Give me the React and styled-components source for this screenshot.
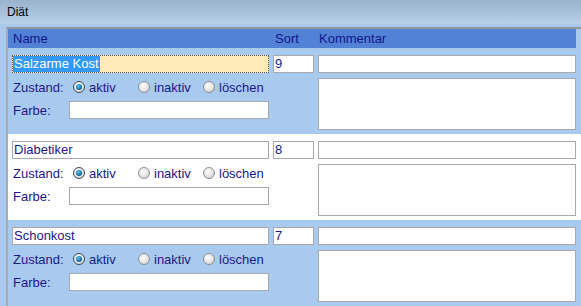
import React from 'react';
import styled, { createGlobalStyle, css } from 'styled-components';

const GlobalStyle = createGlobalStyle`
  html, body {
    margin: 0;
    padding: 0;
    background: #a9caee;
    font-family: "Liberation Sans", Arial, sans-serif;
    font-size: 13px;
    overflow: hidden;
  }
`;

const diets = [
  { name: 'Salzarme Kost', sort: '9', selected: true },
  { name: 'Diabetiker', sort: '8' },
  { name: 'Schonkost', sort: '7' },
];

const states = ['aktiv', 'inaktiv', 'löschen'];

const Window = styled.div`
  width: 581px;
  height: 306px;
  background: #a9caee;
  display: flex;
  flex-direction: column;
  overflow: hidden;
`;

const TitleBar = styled.div`
  height: 24px;
  flex: none;
  display: flex;
  align-items: center;
  padding-left: 7px;
  color: #000;
  font-size: 12px;
  background: linear-gradient(#9ab3cd, #b7cfe8);
`;

const Panel = styled.div`
  margin: 3px 0 0 6px;
  border-top: 2px solid #8f969e;
  border-left: 2px solid #a3abb5;
  flex: 1;
  display: flex;
  flex-direction: column;
`;

const columns = css`
  display: grid;
  grid-template-columns: 257px 41px 258px;
  column-gap: 4px;
`;

const Header = styled.div`
  ${columns}
  height: 19px;
  align-items: center;
  padding-left: 4px;
  margin-right: 5px;
  background: #5182d6;
  color: #15158a;
  span {
    padding-left: 1px;
  }
  span:nth-child(2) {
    padding-left: 2px;
  }
`;

const Row = styled.div`
  ${columns}
  height: 86px;
  box-sizing: border-box;
  padding: 7px 0 0 4px;
  background: ${(p) => (p.$alt ? '#ffffff' : '#a8caef')};
  align-items: start;
`;

const Field = styled.div`
  box-sizing: border-box;
  height: ${(p) => p.$h || 18}px;
  width: ${(p) => (p.$w ? `${p.$w}px` : 'auto')};
  border: 1px solid #a8a8ac;
  background: #fff;
  color: #1d1788;
  line-height: 16px;
  padding-left: 1px;
  white-space: nowrap;
  overflow: hidden;
  ${(p) =>
    p.$focused &&
    css`
      background: #ffe9b9;
      border: 1px dotted #555;
      padding-left: 0;
    `}
`;

const Selection = styled.span`
  background: #3399ff;
  color: #fff;
  display: inline-block;
  height: 16px;
  padding: 0 1px;
`;

const LeftCol = styled.div`
  display: flex;
  flex-direction: column;
`;

const RightCol = styled.div`
  display: flex;
  flex-direction: column;
  gap: 5px;
`;

const Line = styled.div`
  display: flex;
  align-items: center;
  height: ${(p) => p.$h}px;
  margin-top: 6px;
  color: #1d1788;
`;

const Label = styled.span`
  width: ${(p) => p.$w}px;
  padding-left: 1px;
  flex: none;
`;

const Option = styled.span`
  width: 65px;
  display: flex;
  align-items: center;
  gap: 4px;
  flex: none;
`;

const Radio = styled.span`
  width: 12px;
  height: 12px;
  box-sizing: border-box;
  border-radius: 50%;
  border: 1px solid #8c8f94;
  background: radial-gradient(circle at 40% 35%, #ffffff 0%, #e6e6e6 50%, #c4c4c4 100%);
  display: flex;
  align-items: center;
  justify-content: center;
  &::after {
    content: '';
    width: 6px;
    height: 6px;
    border-radius: 50%;
    display: ${(p) => (p.$checked ? 'block' : 'none')};
    background: radial-gradient(circle at 40% 35%, #5fc6ee 0%, #1a77a8 55%, #0c3e66 100%);
  }
  ${(p) =>
    p.$checked &&
    css`
      border-color: #3a4a5a;
      background: radial-gradient(circle at 40% 35%, #ffffff 0%, #dcdcdc 70%, #b0b0b0 100%);
    `}
`;

const DietRow = ({ diet, alt }) => (
  <Row $alt={alt}>
    <LeftCol>
      <Field $focused={diet.selected}>
        {diet.selected ? <Selection>{diet.name}</Selection> : diet.name}
      </Field>
      <Line $h={16}>
        <Label $w={60}>Zustand:</Label>
        {states.map((s, i) => (
          <Option key={s}>
            <Radio $checked={i === 0} />
            {s}
          </Option>
        ))}
      </Line>
      <Line $h={18}>
        <Label $w={56}>Farbe:</Label>
        <Field $w={200} />
      </Line>
    </LeftCol>
    <Field>{diet.sort}</Field>
    <RightCol>
      <Field />
      <Field $h={52} />
    </RightCol>
  </Row>
);

const App = () => (
  <>
    <GlobalStyle />
    <Window>
      <TitleBar>Diät</TitleBar>
      <Panel>
        <Header>
          <span>Name</span>
          <span>Sort</span>
          <span>Kommentar</span>
        </Header>
        {diets.map((d, i) => (
          <DietRow key={d.name} diet={d} alt={i % 2 === 1} />
        ))}
      </Panel>
    </Window>
  </>
);

export default App;
